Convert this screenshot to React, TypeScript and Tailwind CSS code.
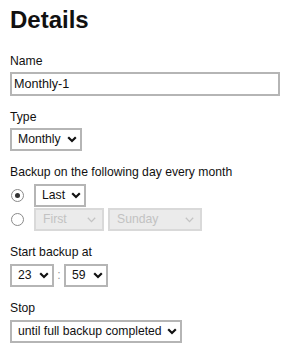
import React from "react";

function Chevron({ disabled }: { disabled?: boolean }) {
  return disabled ? (
    <svg width="9" height="6" viewBox="0 0 9 6" className="shrink-0">
      <polyline points="0.8,0.8 4.5,4.6 8.2,0.8" fill="none" stroke="#c4c4c4" strokeWidth="1.3" />
    </svg>
  ) : (
    <svg width="10" height="7" viewBox="0 0 10 7" className="shrink-0">
      <polyline points="1.2,1.3 5,5 8.8,1.3" fill="none" stroke="#111" strokeWidth="2.2" />
    </svg>
  );
}

function Select({ value, w, disabled }: { value: string; w: string; disabled?: boolean }) {
  return (
    <div
      className={
        disabled
          ? `${w} h-[23px] border-2 border-[#d9d9d9] bg-[#ebebeb] text-[#c2c2c2] flex items-center justify-between pl-[7px] pr-[6px]`
          : `${w} h-[23px] border-2 border-[#b5b5b5] bg-white text-[#111] flex items-center justify-between pl-[6px] pr-[3px]`
      }
    >
      <span className="leading-[15px] whitespace-nowrap">{value}</span>
      <Chevron disabled={disabled} />
    </div>
  );
}

function Radio({ checked }: { checked?: boolean }) {
  return (
    <div className="w-[13px] h-[13px] rounded-full border border-[#8a8a8a] bg-white flex items-center justify-center shrink-0">
      {checked && <div className="w-[5px] h-[5px] rounded-full bg-[#333]" />}
    </div>
  );
}

function Label({ children }: { children: React.ReactNode }) {
  return <div className="h-[15px] leading-[15px] text-[#111] whitespace-nowrap">{children}</div>;
}

export default function App() {
  return (
    <div
      className="w-[290px] h-[355px] bg-white px-[10px] pt-[6px] text-[12.2px]"
      style={{ fontFamily: '"Liberation Sans", Arial, sans-serif' }}
    >
      <h1 className="text-[24px] leading-[28px] font-bold text-[#111]">Details</h1>

      <div className="mt-[20px]">
        <Label>Name</Label>
        <div className="mt-[3px] w-[270px] h-[24px] border-2 border-[#b5b5b5] flex items-center pl-[2px] text-[#111] text-[12.6px]">
          Monthly-1
        </div>
      </div>

      <div className="mt-[14px]">
        <Label>Type</Label>
        <div className="mt-[3px] flex">
          <Select value="Monthly" w="w-[72px]" />
        </div>
      </div>

      <div className="mt-[14px]">
        <Label>Backup on the following day every month</Label>
        <div className="mt-[4px] flex flex-col gap-[1px]">
          <div className="flex items-center">
            <div className="w-[24px] pl-[1px] flex">
              <Radio checked />
            </div>
            <Select value="Last" w="w-[52px]" />
          </div>
          <div className="flex items-center">
            <div className="w-[24px] pl-[1px] flex">
              <Radio />
            </div>
            <Select value="First" w="w-[70px]" disabled />
            <div className="ml-[4px]">
              <Select value="Sunday" w="w-[94px]" disabled />
            </div>
          </div>
        </div>
      </div>

      <div className="mt-[14px]">
        <Label>Start backup at</Label>
        <div className="mt-[4px] flex items-center">
          <Select value="23" w="w-[44px]" />
          <span className="w-[10px] text-center text-[#999] leading-[15px]">:</span>
          <Select value="59" w="w-[44px]" />
        </div>
      </div>

      <div className="mt-[14px]">
        <Label>Stop</Label>
        <div className="mt-[4px] flex">
          <Select value="until full backup completed" w="w-[172px]" />
        </div>
      </div>
    </div>
  );
}
